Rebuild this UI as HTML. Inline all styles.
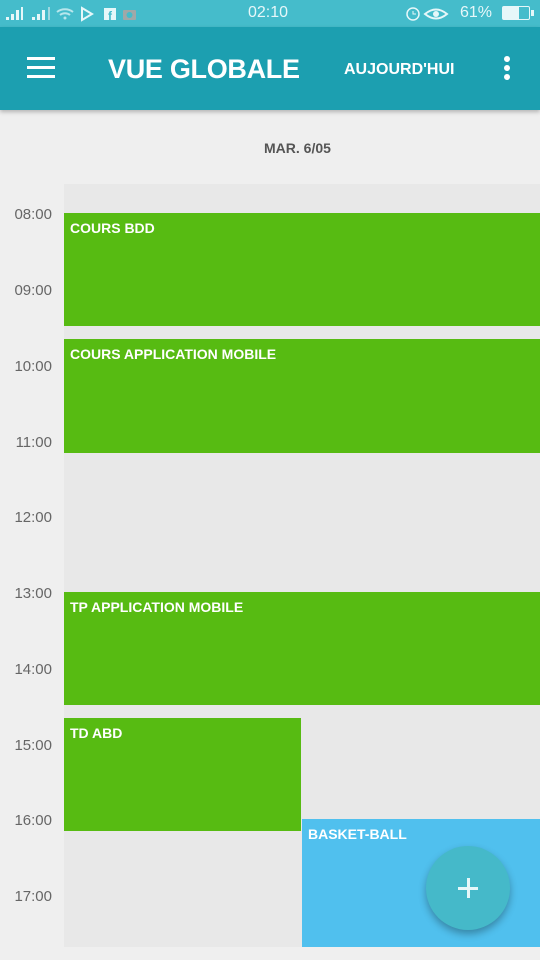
<!DOCTYPE html>
<html><head><meta charset="utf-8"><style>
*{margin:0;padding:0;box-sizing:border-box}
body{width:540px;height:960px;background:#efefef;font-family:"Liberation Sans",sans-serif;position:relative;overflow:hidden}
.abs{position:absolute}
#sb{left:0;top:0;width:540px;height:27px;background:#45bccb;color:#e6f7f9;font-size:16px}
#tb{left:0;top:27px;width:540px;height:83px;background:#1c9fb0;box-shadow:0 2px 4px rgba(0,0,0,.25);color:#fff}
.lbl{left:0;width:52px;text-align:right;color:#666;font-size:15px}
.ev{color:#fff;font-weight:bold;font-size:14px;padding:7px 6px}
.g{background:#57bb12}
</style></head><body>
<div id="sb" class="abs">
 <svg class="abs" style="left:6px;top:6px" width="130" height="16">
  <g fill="#e6f7f9"><rect x="0" y="11" width="3" height="3"/><rect x="5" y="8" width="3" height="6"/><rect x="10" y="4" width="3" height="10"/><rect x="15" y="1" width="2" height="13"/>
  <rect x="26" y="11" width="3" height="3"/><rect x="31" y="8" width="3" height="6"/><rect x="36" y="4" width="3" height="10"/></g>
  <rect x="42" y="1" width="2" height="13" fill="#9fd8e0"/>
  <path d="M51 6a13 13 0 0 1 16 0M54 9a8 8 0 0 1 10 0" stroke="#b8e6ec" stroke-width="2" fill="none"/><circle cx="59" cy="12" r="1.5" fill="#b8e6ec"/>
  <path d="M76 2l10 6-10 6z" fill="none" stroke="#e6f7f9" stroke-width="2"/>
  <rect x="98" y="2" width="12" height="12" fill="#e6f7f9"/><text x="102" y="14" font-size="12" font-weight="bold" fill="#45bccb">f</text>
  <rect x="117" y="4" width="13" height="10" rx="1" fill="#a0a8a8"/><circle cx="123.5" cy="9" r="3" fill="#45bccb"/>
 </svg>
 <div class="abs" style="left:248px;top:4px">02:10</div>
 <svg class="abs" style="left:405px;top:5px" width="60" height="18"><circle cx="8" cy="9" r="6" stroke="#e6f7f9" stroke-width="1.5" fill="none"/><path d="M8 6v3h3" stroke="#e6f7f9" fill="none"/>
 <path d="M20 9q11-9 22 0q-11 9-22 0z" stroke="#e6f7f9" stroke-width="2" fill="none"/><circle cx="31" cy="9" r="3" fill="#e6f7f9"/></svg>
 <div class="abs" style="left:460px;top:4px">61%</div>
 <div class="abs" style="left:502px;top:6px;width:28px;height:14px;border:1.5px solid #e6f7f9;border-radius:2px"><div style="width:60%;height:100%;background:#e6f7f9"></div></div>
 <div class="abs" style="left:531px;top:10px;width:3px;height:6px;background:#e6f7f9"></div>
</div>
<div id="tb" class="abs">
 <div class="abs" style="left:27px;top:30px;width:28px;height:3px;background:#fff;box-shadow:0 9px #fff,0 18px #fff"></div>
 <div class="abs" style="left:108px;top:27px;font-size:27px;font-weight:bold;letter-spacing:-0.3px">VUE GLOBALE</div>
 <div class="abs" style="left:344px;top:34px;font-size:16px;font-weight:bold">AUJOURD'HUI</div>
 <div class="abs" style="left:504px;top:29px;width:6px;height:6px;border-radius:3px;background:#fff;box-shadow:0 9px #fff,0 18px #fff"></div>
</div>
<div class="abs" style="left:264px;top:140px;font-size:14px;font-weight:bold;color:#555">MAR. 6/05</div>
<div class="abs" style="left:64px;top:184px;width:476px;height:763px;background:#e8e8e8"></div>
<div class="abs lbl" style="top:206px">08:00</div>
<div class="abs lbl" style="top:282px">09:00</div>
<div class="abs lbl" style="top:358px">10:00</div>
<div class="abs lbl" style="top:434px">11:00</div>
<div class="abs lbl" style="top:509px">12:00</div>
<div class="abs lbl" style="top:585px">13:00</div>
<div class="abs lbl" style="top:661px">14:00</div>
<div class="abs lbl" style="top:737px">15:00</div>
<div class="abs lbl" style="top:812px">16:00</div>
<div class="abs lbl" style="top:888px">17:00</div>
<div class="abs ev g" style="left:64px;top:213px;width:476px;height:113px">COURS BDD</div>
<div class="abs ev g" style="left:64px;top:339px;width:476px;height:114px">COURS APPLICATION MOBILE</div>
<div class="abs ev g" style="left:64px;top:592px;width:476px;height:113px">TP APPLICATION MOBILE</div>
<div class="abs ev g" style="left:64px;top:718px;width:237px;height:113px">TD ABD</div>
<div class="abs ev" style="left:302px;top:819px;width:238px;height:128px;background:#50c0ee">BASKET-BALL</div>
<div class="abs" style="left:426px;top:846px;width:84px;height:84px;border-radius:50%;background:#45b9c9;box-shadow:0 4px 8px rgba(0,0,0,.3)">
 <div class="abs" style="left:32px;top:41px;width:20px;height:2.5px;background:#e6f7f9"></div>
 <div class="abs" style="left:41px;top:32px;width:2.5px;height:20px;background:#e6f7f9"></div>
</div>
</body></html>
